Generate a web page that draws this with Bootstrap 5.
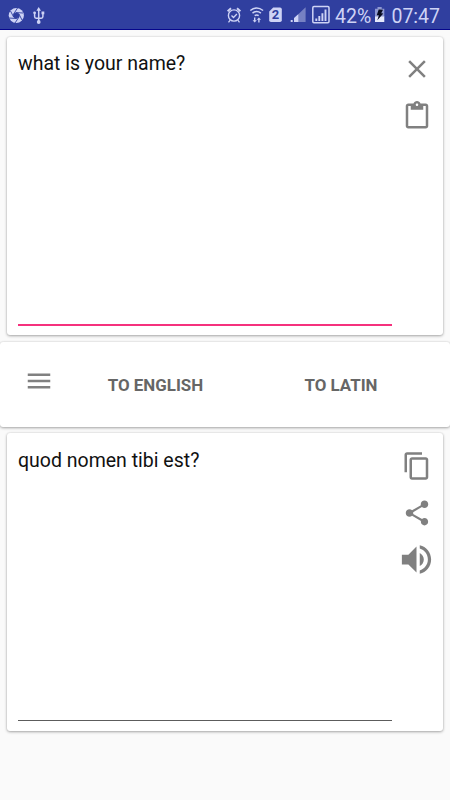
<!DOCTYPE html>
<html lang="en">
<head>
<meta charset="utf-8">
<meta name="viewport" content="width=device-width, initial-scale=1">
<title>Translator</title>
<link href="https://cdn.jsdelivr.net/npm/bootstrap@5.3.0/dist/css/bootstrap.min.css" rel="stylesheet">
<style>
body { background: #fafafa; font-family: Roboto, "Liberation Sans", sans-serif; }
svg { display: block; flex: none; }
.screen { width: 450px; height: 800px; }
.status-bar { height: 30px; background: #303f9f; border-bottom: 1px solid #06068c; color: #ced3f5; padding-right: 10px; }
.status-text { font-size: 19.5px; line-height: 30px; padding-top: 4px; white-space: nowrap; }
.panel { border-radius: 3px; background: #fff; box-shadow: 0 1px 3px rgba(0,0,0,.32), 0 0 2px rgba(0,0,0,.12); }
.text-panel { height: 298px; margin: 7px 7px 0 7px; padding: 0 7px 0 11px; }
.field { width: 374px; color: #111; font-size: 19.5px; line-height: 24px; padding-top: 16px; }
.field-source { height: 289px; border-bottom: 2px solid #f5317d; padding-top: 15px; }
.field-result { height: 288px; border-bottom: 1px solid #5c5c5c; }
.tools { width: 44px; color: #808080; }
.tools svg { margin-left: 10px; }
.tools-source { padding-top: 17px; gap: 17px; }
.tools-result { padding-top: 18px; gap: 17px; }
.tools .speaker { margin: -5px 0 0 5px; }
.direction-bar { height: 85px; margin-top: 7px; color: #666; }
.direction-bar + .text-panel { margin-top: 6px; }
.direction-bar .btn { --bs-btn-color: #666; font-size: 16.9px; font-weight: 700; line-height: 20px; padding: 0; border: 0; }
.menu-icon { margin: 23.7px 0 0 24px; color: #808080; }
.to-english { margin: 33px 0 0 53.5px; width: 96px; }
.to-latin { margin: 33px 0 0 100px; width: 75px; }
</style>
<script src="https://cdn.jsdelivr.net/npm/bootstrap@5.3.0/dist/js/bootstrap.bundle.min.js"></script>
</head>
<body>
<main class="screen d-flex flex-column overflow-hidden">
  <header class="status-bar d-flex align-items-center">
    <svg width="226" height="30" viewBox="0 0 226 30">
      <circle cx="16.3" cy="15.5" r="7.6" fill="#ced3f5"/>
      <g stroke="#303f9f" stroke-width=".9" fill="none">
        <path d="M16.3 12.6 23 13M19 14.1 22 20M19 17 15 23M16.3 18.5 9 18M13.6 17 10.5 11M13.6 14.1 17.5 8"/>
        <path fill="#303f9f" d="M16.3 12.6 19 14.1V17L16.3 18.5 13.6 17V14.1Z"/>
      </g>
      <g fill="#ced3f5"><path d="m38.7 7 2.3 3.8h-4.6Z"/><circle cx="38.7" cy="22" r="1.9"/><circle cx="34.6" cy="12.8" r="1.4"/><path d="M41.5 11.5h2.8v2.8h-2.8z"/></g>
      <path d="M38.7 10v12M34.6 13v3.5q0 1.7 1.5 1.7h5.2q1.6 0 1.6-1.7V13" stroke="#ced3f5" stroke-width="1.5" fill="none"/>
    </svg>
    <svg width="109" height="30" viewBox="226 0 109 30" fill="none" stroke="#ced3f5">
      <circle cx="234" cy="15.5" r="5.6" stroke-width="1.4"/>
      <path stroke-width="1.3" d="m231.5 15.5 2 2 3.4-3.5M230.2 20.2l-1.7 2.2M237.8 20.2l1.7 2.2"/>
      <path stroke-width="1.9" d="m227.6 11.3 3.4-3M240.4 11.3l-3.4-3"/>
      <path stroke-width="1.5" d="M250.3 10.5q6.4-5.2 12.8 0M252.5 13.1q4.2-3.3 8.4 0M254.7 15.6q2-1.4 4 0"/>
      <path fill="#ced3f5" stroke="none" d="M254 17.5h1.4v2.8h1.4l-2.1 2.2-2.1-2.2h1.4zM258.2 22.5h1.4v-2.8h1.4l-2.1-2.2-2.1 2.2h1.4z"/>
      <path fill="#ced3f5" stroke="none" d="M269.2 11.5 273.2 7.5H280q1.8 0 1.8 1.8v11q0 1.8-1.8 1.8h-9q-1.8 0-1.8-1.8z"/>
      <text x="275.6" y="19.4" text-anchor="middle" font-size="13" font-weight="700" fill="#303f9f" stroke="none">2</text>
      <path fill="#7681c3" stroke="none" d="m298 14.5 7.6-7.2V22H298z"/>
      <path fill="#ced3f5" stroke="none" d="M290.7 20h2v2h-2zM294 18l3.3-3v7H294zM297.3 15l1-.8V22h-1z"/>
      <rect x="312.8" y="6.6" width="16.2" height="16.2" rx="1.2" stroke-width="1.5"/>
      <path stroke-width="1.9" d="M316.3 18.5v2.5M319.3 16v5M322.4 13.3V21M325.5 9.5V21"/>
    </svg>
    <span class="status-text" style="width:37px">42%</span>
    <svg class="ms-auto" width="12" height="30" viewBox="374.5 0 12 30">
      <path fill="#8f99d2" d="M378 7h4.2v1.7h2.6V17h-9.3V8.7h2.5z"/><path fill="#e5e8fb" d="M375.5 16.5h9.3V22h-9.3z"/><path fill="#080b20" d="m379.2 9.5 4.3.2-1.8 3.5 2.1.3-6 6.8 1.6-5.1h-2.2z"/>
    </svg>
    <span class="status-text text-end" style="width:54px">07:47</span>
  </header>

  <section class="panel text-panel d-flex flex-shrink-0">
    <div class="field field-source" id="source">what is your name?</div>
    <div class="tools tools-source d-flex flex-column">
      <svg width="30" height="30" viewBox="0 0 24 24" fill="currentColor"><path d="M19 6.41 17.59 5 12 10.59 6.41 5 5 6.41 10.59 12 5 17.59 6.41 19 12 13.41 17.59 19 19 17.59 13.41 12z"/></svg>
      <svg width="30" height="30" viewBox="0 0 24 24" fill="currentColor"><path d="M19 2h-4.18C14.4.84 13.3 0 12 0S9.6.84 9.18 2H5c-1.1 0-2 .9-2 2v16c0 1.1.9 2 2 2h14c1.1 0 2-.9 2-2V4c0-1.1-.9-2-2-2zm-7 0c.55 0 1 .45 1 1s-.45 1-1 1-1-.45-1-1 .45-1 1-1zm7 18H5V4h2v3h10V4h2z"/></svg>
    </div>
  </section>

  <nav class="panel direction-bar d-flex align-items-start flex-shrink-0">
    <svg class="menu-icon" width="30" height="30" viewBox="0 0 24 24" fill="currentColor"><path d="M3 18h18v-2H3zm0-5h18v-2H3zm0-7v2h18V6z"/></svg>
    <button type="button" class="btn to-english text-nowrap">TO ENGLISH</button>
    <button type="button" class="btn to-latin text-nowrap">TO LATIN</button>
  </nav>

  <section class="panel text-panel d-flex flex-shrink-0">
    <div class="field field-result" id="result">quod nomen tibi est?</div>
    <div class="tools tools-result d-flex flex-column">
      <svg width="30" height="30" viewBox="0 0 24 24" fill="currentColor"><path d="M16 1H4c-1.1 0-2 .9-2 2v14h2V3h12zm3 4H8c-1.1 0-2 .9-2 2v14c0 1.1.9 2 2 2h11c1.1 0 2-.9 2-2V7c0-1.1-.9-2-2-2zm0 16H8V7h11z"/></svg>
      <svg width="30" height="30" viewBox="0 0 24 24" fill="currentColor"><path d="M18 16.08c-.76 0-1.44.3-1.96.77L8.91 12.7c.05-.23.09-.46.09-.7s-.04-.47-.09-.7l7.05-4.11c.54.5 1.25.81 2.04.81 1.66 0 3-1.34 3-3s-1.34-3-3-3-3 1.34-3 3c0 .24.04.47.09.7L8.04 9.81C7.5 9.31 6.79 9 6 9c-1.66 0-3 1.34-3 3s1.34 3 3 3c.79 0 1.5-.31 2.04-.81l7.12 4.16c-.05.21-.08.43-.08.65 0 1.61 1.31 2.92 2.92 2.92s2.92-1.31 2.92-2.92-1.31-2.92-2.92-2.92z"/></svg>
      <svg class="speaker" width="39" height="39" viewBox="0 0 24 24" fill="currentColor"><path d="M3 9v6h4l5 5V4L7 9zm13.5 3c0-1.77-1.02-3.29-2.5-4.03v8.05c1.48-.73 2.5-2.25 2.5-4.02zM14 3.23v2.06c2.89.86 5 3.54 5 6.71s-2.11 5.85-5 6.71v2.06c4.01-.91 7-4.49 7-8.77s-2.99-7.86-7-8.77z"/></svg>
    </div>
  </section>
</main>
</body>
</html>
